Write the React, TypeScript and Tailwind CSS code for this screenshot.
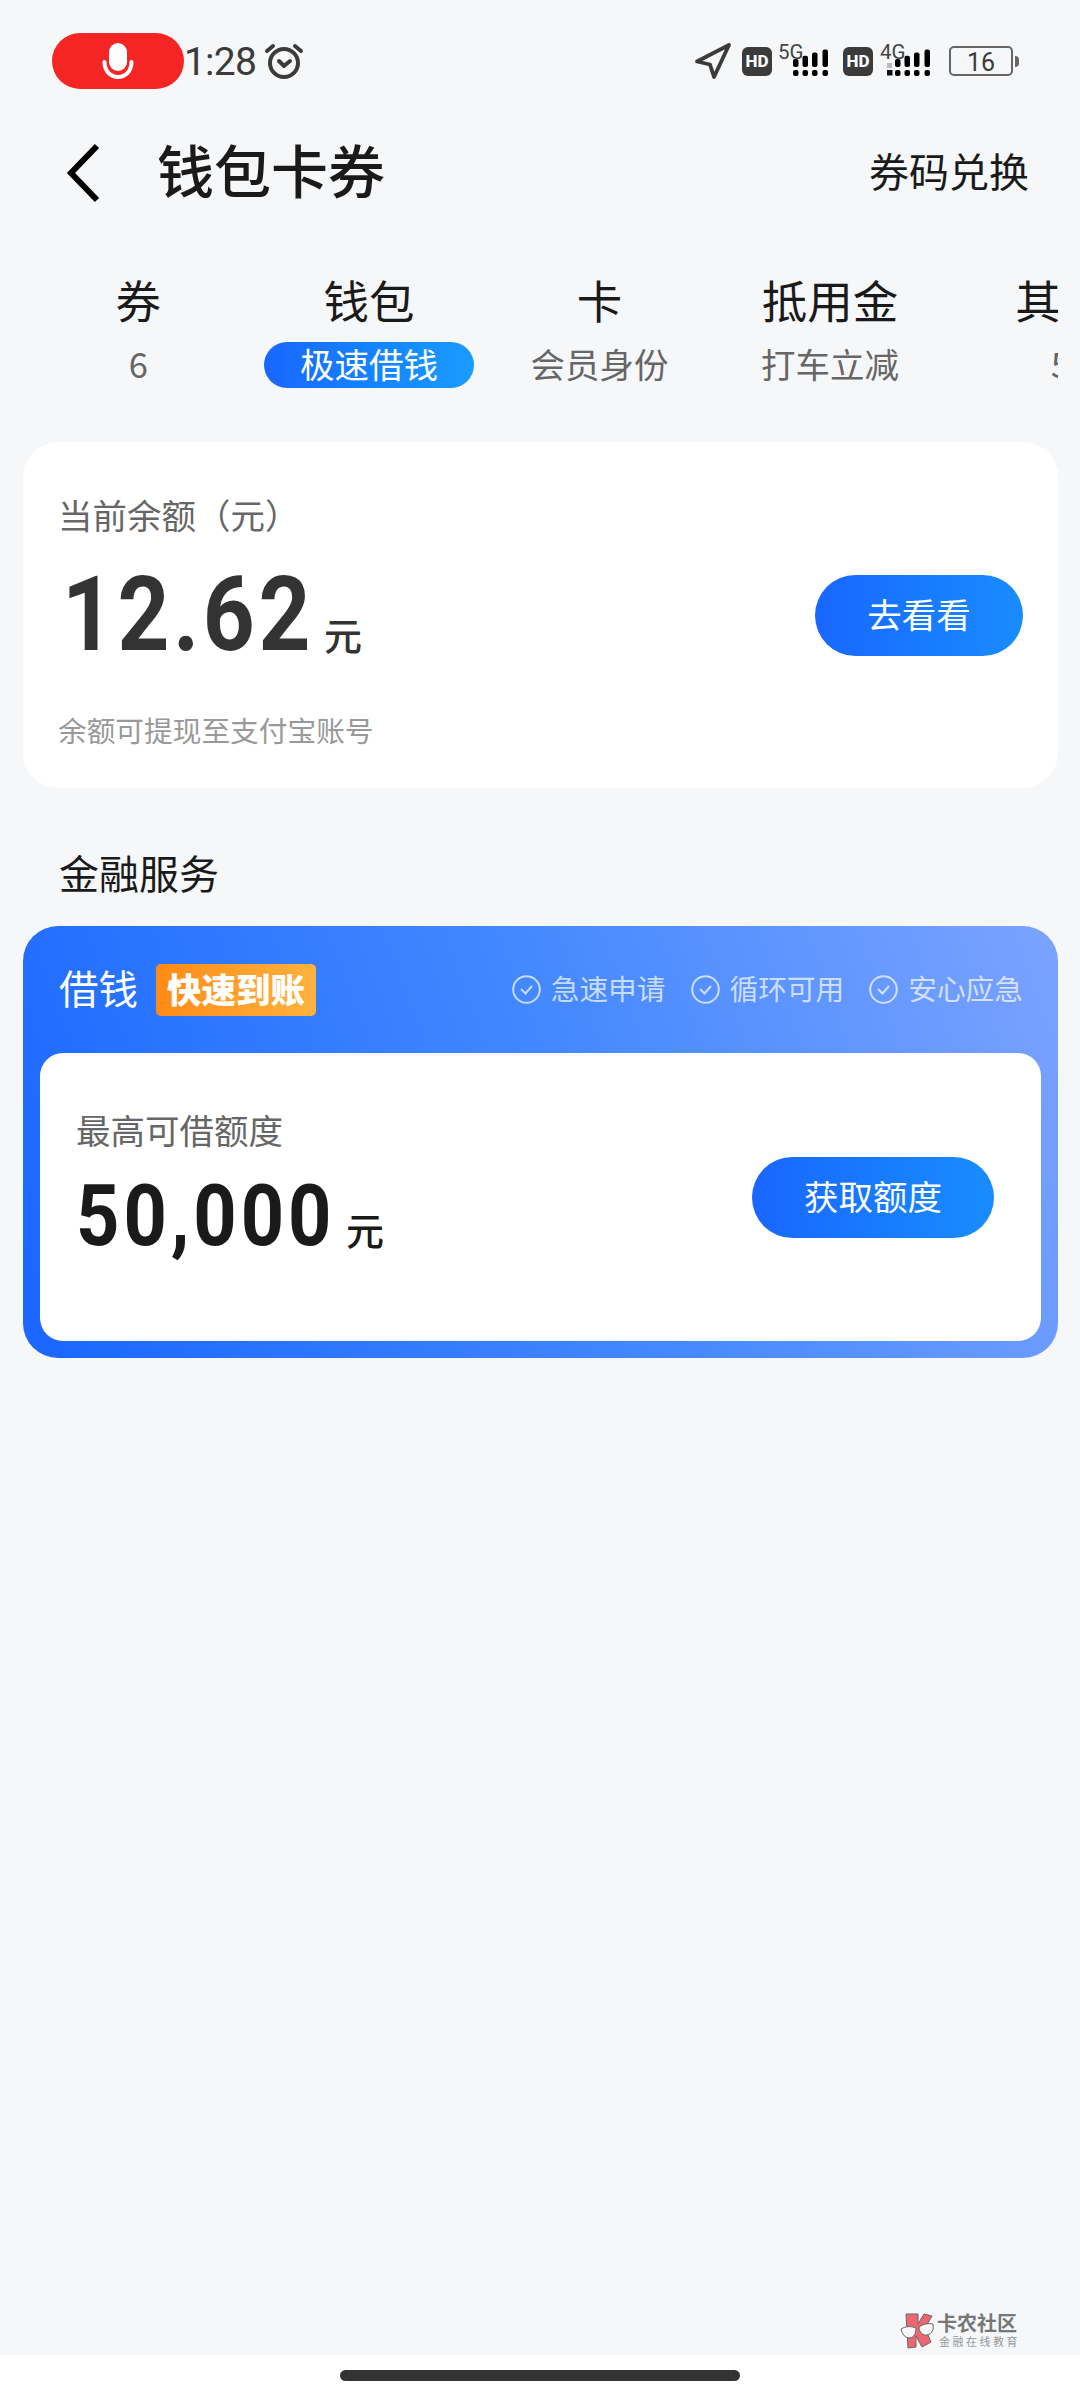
import React from 'react';

interface Tab {
  title: string;
  sub: string;
  active?: boolean;
}

const tabs: Tab[] = [
  { title: '券', sub: '6' },
  { title: '钱包', sub: '极速借钱', active: true },
  { title: '卡', sub: '会员身份' },
  { title: '抵用金', sub: '打车立减' },
  { title: '其他', sub: '5' },
];

const features = ['急速申请', '循环可用', '安心应急'];

const HdBadge: React.FC = () => (
  <span className="flex h-[29px] w-[30px] items-center justify-center rounded-md bg-[#3b3b3b] font-[Roboto] text-[17px] font-extrabold leading-none text-white">
    HD
  </span>
);

interface SignalProps {
  label: string;
  weak?: boolean;
}

const Signal: React.FC<SignalProps> = ({ label, weak }) => (
  <svg width="52" height="40" viewBox="0 0 52 40" className="block">
    {weak && <rect x="7" y="22" width="5" height="5" fill="#bbb" />}
    {weak && <rect x="7" y="29" width="5.500" height="5.500" fill="#111" />}
    {[15, 24.5, 34, 44.5].map((x, i) => (
      <g key={x} fill="#000">
        <rect x={x} y={18 - i * 3.2} width="5.500" height={8 + i * 3.2} rx="2" />
        <rect x={x} y="29" width="5.500" height="6" rx="2" />
      </g>
    ))}
    <text x="0" y="17.500" fontSize="20.500" fontFamily="Roboto" fill="#444">
      {label}
    </text>
  </svg>
);

const StatusBar: React.FC = () => (
  <div className="flex h-[122px] items-start justify-between pl-[52px] pr-[61px] pt-[33px]">
    <div className="flex h-[56px] items-center">
      <div className="flex h-[56px] w-[132px] items-center justify-center rounded-full bg-[#f52525]">
        <svg width="34" height="40" viewBox="0 0 34 40" fill="none">
          <rect x="8" y="2" width="18" height="28" rx="9" fill="#fff" />
          <path d="M3.500 21c0 9 6 15 13.500 15s13.500-6 13.500-15" stroke="#fff" strokeWidth="4" strokeLinecap="round" />
        </svg>
      </div>
      <span className="w-[80px] pt-[2px] font-[Roboto] text-[39px] leading-[56px] tracking-[-0.8px] text-[#3b3b3b]">1:28</span>
      <svg width="40" height="38" viewBox="0 0 40 38" fill="none" stroke="#3b3b3b" strokeWidth="4" strokeLinecap="round" strokeLinejoin="round">
        <circle cx="20" cy="21" r="14" />
        <path d="M15 19l5 5 6-5" />
        <path d="M3 9l6-5M37 9l-6-5" />
      </svg>
    </div>
    <div className="flex h-[56px] items-center">
      <svg width="38" height="38" viewBox="0 0 38 38" fill="none" stroke="#3b3b3b" strokeWidth="3.800" strokeLinejoin="round" className="mr-[10px]">
        <path d="M35 3L3 19.500l13 3L20 35z" />
      </svg>
      <HdBadge />
      <span className="ml-[6px]"><Signal label="5G" /></span>
      <span className="ml-[13px]"><HdBadge /></span>
      <span className="ml-[7px]"><Signal label="4G" weak /></span>
      <span className="ml-[17px] flex h-[30px] w-[64px] items-center justify-center rounded-[5px] border-2 border-[#666] pt-[2px] font-[Roboto] text-[25px] leading-none text-[#3b3b3b]">
        16
      </span>
      <span className="ml-[2px] h-[11px] w-[4px] rounded-r-full bg-[#666]" />
    </div>
  </div>
);

interface PillButtonProps {
  className: string;
  children: React.ReactNode;
}

const PillButton: React.FC<PillButtonProps> = ({ className, children }) => (
  <button className={`flex h-[81px] shrink-0 items-center justify-center rounded-full bg-linear-to-r from-[#1a66ff] to-[#1a8cff] pb-[2px] text-[34.5px] text-white ${className}`}>
    {children}
  </button>
);

const Watermark: React.FC = () => (
  <div className="flex items-center">
    <svg width="36" height="36" viewBox="0 0 36 36">
      <path d="M6 1h12v10L24 1l8 2-7 12 6 14-9 5-6-11v11L8 35z" fill="#ef6673" stroke="#666" strokeWidth="1" />
      <path d="M1 16c5-3 10-3 15-1 0 6-2 9-6 10-5 0-8-4-9-9zM19 14c4-3 9-4 14-3 1 6-1 10-6 11-4 1-8-3-8-8z" fill="#f7f7f7" stroke="#666" strokeWidth="1" />
    </svg>
    <div className="ml-px w-[82px]">
      <p className="text-[20px] font-bold leading-[22px] text-[#777]">卡农社区</p>
      <p className="whitespace-nowrap pl-[2px] text-[11px] leading-[15px] tracking-[2.500px] text-[#999]">金融在线教育</p>
    </div>
  </div>
);

const App: React.FC = () => {
  return (
    <div className="flex h-[2400px] w-[1080px] flex-col overflow-hidden bg-[#f5f7f9] font-['Noto_Sans_CJK_SC',sans-serif] text-[#1a1a1a]">
      <StatusBar />

      <header className="flex h-[102px] items-center justify-between pl-[66px] pr-[51px]">
        <div className="flex items-center">
          <svg width="34" height="60" viewBox="0 0 34 60" fill="none" stroke="#000" strokeWidth="6">
            <path d="M31 3L5 30l26 27" />
          </svg>
          <h1 className="ml-[57px] pb-[10px] text-[57px] font-medium leading-[80px]">钱包卡券</h1>
        </div>
        <span className="pb-[6px] text-[40px]">券码兑换</span>
      </header>

      <nav className="ml-[23px] mr-[22px] mt-[38px] flex h-[180px] overflow-hidden pt-[3px]">
        {tabs.map((tab) => (
          <div key={tab.title} className="flex w-[230.600px] shrink-0 flex-col items-center">
            <span className="text-[45.500px] leading-[68px]">{tab.title}</span>
            {tab.active ? (
              <span className="mt-[9px] flex h-[46px] w-[210px] items-center justify-center rounded-full bg-linear-to-r from-[#1a66ff] to-[#1a9cff] pb-[2px] text-[34.500px] text-white">
                {tab.sub}
              </span>
            ) : (
              <span className="mt-[4px] text-[34.500px] leading-[52px] text-[#666]">{tab.sub}</span>
            )}
          </div>
        ))}
      </nav>

      <section className="ml-[23px] mr-[22px] flex h-[346px] flex-col rounded-[35px] bg-white px-[35px] pt-[47px]">
        <p className="text-[34.500px] leading-[50px] text-[#666]">当前余额（元）</p>
        <div className="mt-[2px] flex h-[148px] items-center justify-between">
          <div className="flex h-[100px] items-baseline text-[#333]">
            <span className="ml-[4px] block w-[262px] origin-left scale-x-[0.88] whitespace-nowrap font-[Roboto] text-[103px] font-bold leading-[100px] tracking-[4px]">12.62</span>
            <span className="text-[38px] font-medium leading-none">元</span>
          </div>
          <PillButton className="w-[208px]">去看看</PillButton>
        </div>
        <p className="mt-[21px] text-[28.700px] leading-[40px] text-[#999]">余额可提现至支付宝账号</p>
      </section>

      <h2 className="ml-[59px] mt-[54px] text-[40px] leading-[60px]">金融服务</h2>

      <section className="ml-[23px] mr-[22px] mt-[24px] h-[432px] rounded-[35px] bg-linear-[70deg] from-[#1a66ff] via-[#3f86fe] to-[#7ba3ff] px-[17px]">
        <div className="flex h-[127px] items-center justify-between pl-[19px] pr-[18px] text-white">
          <div className="flex items-center">
            <span className="pb-[6px] text-[39.500px]">借钱</span>
            <span className="ml-[18px] flex h-[52px] w-[160px] items-center justify-center rounded-[5px] bg-linear-to-r from-[#ff8a14] to-[#ffb23c] pb-[2px] text-[34.500px] font-black">
              快速到账
            </span>
          </div>
          <div className="flex gap-[25px]">
            {features.map((feature) => (
              <span key={feature} className="flex items-center gap-[10px] text-[28.700px] text-white/70">
                <svg width="29" height="29" viewBox="0 0 29 29" fill="none" stroke="currentColor" strokeWidth="2">
                  <circle cx="14.500" cy="14.500" r="13.300" />
                  <path d="M9 14l4.500 4.500L20 11" />
                </svg>
                <span className="pb-[3px]">{feature}</span>
              </span>
            ))}
          </div>
        </div>
        <div className="flex h-[288px] items-center justify-between rounded-[23px] bg-white pl-[36px] pr-[47px]">
          <div className="h-[198px]">
            <p className="text-[34.500px] leading-[62px] text-[#666]">最高可借额度</p>
            <div className="mt-[6px] flex items-baseline">
              <span className="block w-[270px] origin-left scale-x-[0.88] whitespace-nowrap font-[Roboto] text-[86px] font-bold leading-[100px] tracking-[4.500px]">50,000</span>
              <span className="text-[38px] font-medium leading-none">元</span>
            </div>
          </div>
          <PillButton className="w-[242px]">获取额度</PillButton>
        </div>
      </section>

      <div className="flex flex-1 items-end justify-end pb-[6px] pr-[61px]">
        <Watermark />
      </div>
      <div className="flex h-[45px] justify-center bg-white pt-[15px]">
        <span className="h-[11px] w-[400px] rounded-full bg-[#333]" />
      </div>
    </div>
  );
};

export default App;
